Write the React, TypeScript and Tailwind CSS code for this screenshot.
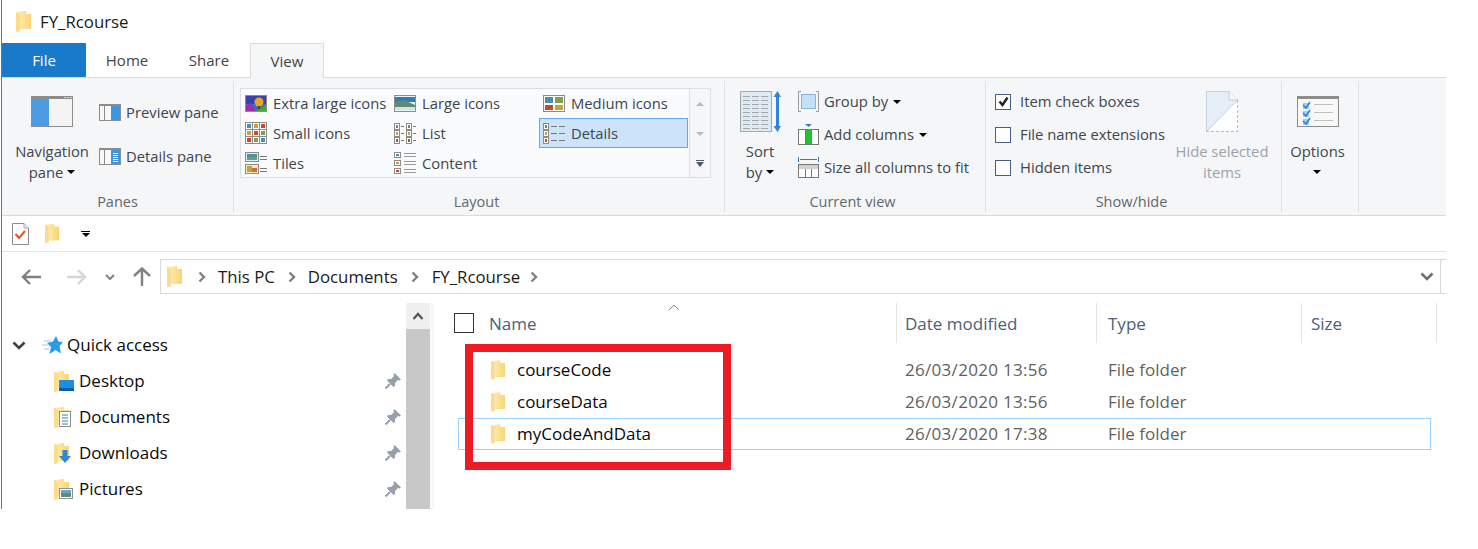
import React from 'react';

const FONT = "font-['Open_Sans',sans-serif]";

function Folder({ className = 'w-[15px] h-[21px]' }: { className?: string }) {
  return (
    <svg viewBox="0 0 15 21" className={className}>
      <defs>
        <linearGradient id="fold" x1="0" y1="0" x2="1" y2="0">
          <stop offset="0" stopColor="#fff0b8" />
          <stop offset="1" stopColor="#f8d476" />
        </linearGradient>
      </defs>
      <path d="M0 1 L10 0 L10 3 L15 3 L15 18 L4 18 L4 20 L1 21 L0 20 Z" fill="url(#fold)" />
      <path d="M0 1 L4 3 L4 20 L1 21 L0 20 Z" fill="#fbdc8c" />
    </svg>
  );
}

function Caret() {
  return <span className="inline-block w-0 h-0 border-l-[4px] border-r-[4px] border-t-[4px] border-l-transparent border-r-transparent border-t-black align-middle" />;
}

function NavPaneIcon() {
  return (
    <svg viewBox="0 0 42 31" className="w-[42px] h-[31px]">
      <rect x="0.5" y="0.5" width="41" height="30" fill="#f4f4f4" stroke="#8c8c8c" />
      <rect x="0" y="0" width="42" height="3" fill="#8c8c8c" />
      <rect x="33" y="1" width="2" height="1" fill="#ddd" /><rect x="36" y="1" width="2" height="1" fill="#ddd" /><rect x="39" y="1" width="2" height="1" fill="#ddd" />
      <rect x="1" y="3" width="17" height="27" fill="#4a9de2" />
    </svg>
  );
}

function PaneIcon({ lines }: { lines?: boolean }) {
  return (
    <svg viewBox="0 0 22 17" className="w-[22px] h-[17px]">
      <rect x="0.5" y="0.5" width="21" height="16" fill="#f8f8f8" stroke="#8c8c8c" />
      <rect x="0" y="0" width="22" height="2" fill="#8c8c8c" />
      <rect x="5" y="2" width="1" height="14" fill="#8c8c8c" />
      <rect x="12" y="2" width="9" height="14" fill="#3d96e0" />
      {lines && [5, 7, 9, 11, 13].map((y) => <rect key={y} x="14" y={y} width="5" height="1" fill="#fff" />)}
    </svg>
  );
}

function Pic({ x, y, w, h, kind }: { x: number; y: number; w: number; h: number; kind: number }) {
  const fills = ['#4d8fa8', '#c9a13a', '#c8492b', '#7ea04c'];
  return (
    <g>
      <rect x={x + 0.5} y={y + 0.5} width={w - 1} height={h - 1} fill="#fff" stroke="#8c8c8c" />
      <rect x={x + 2} y={y + 2} width={w - 4} height={h - 4} fill={fills[kind % 4]} />
    </g>
  );
}

function LayoutIcon({ name }: { name: string }) {
  if (name === 'xl') {
    return (
      <svg viewBox="0 0 22 17" className="w-[22px] h-[17px]">
        <rect x="0.5" y="0.5" width="21" height="16" fill="#2f6fd0" stroke="#8c8c8c" />
        <rect x="1" y="1" width="20" height="8" fill="#3b3fb0" />
        <path d="M1 16 L1 11 L6 8 L10 16 Z" fill="#a52aa5" />
        <path d="M11 16 L21 10 L21 16 Z" fill="#46a832" />
        <circle cx="14" cy="7" r="4.5" fill="#e8a820" />
        <rect x="13" y="11" width="2" height="3" fill="#6b3a1a" />
      </svg>
    );
  }
  if (name === 'large') {
    return (
      <svg viewBox="0 0 22 17" className="w-[22px] h-[17px]">
        <rect x="0.5" y="0.5" width="21" height="16" fill="#eef3f5" stroke="#8c8c8c" />
        <rect x="1" y="2" width="20" height="5" fill="#2f7fb0" />
        <path d="M1 7 L10 5 L21 10 L21 15 L1 15 Z" fill="#5f8a7a" />
        <rect x="1" y="12" width="20" height="3" fill="#d5e3e0" />
      </svg>
    );
  }
  if (name === 'medium') {
    return (
      <svg viewBox="0 0 22 17" className="w-[22px] h-[17px]">
        <rect x="0.5" y="0.5" width="21" height="16" fill="#fff" stroke="#8c8c8c" />
        <rect x="2" y="2" width="8" height="6" fill="#4d8fa8" /><rect x="12" y="2" width="8" height="6" fill="#7ea04c" />
        <rect x="2" y="10" width="8" height="5" fill="#c8492b" /><rect x="12" y="10" width="8" height="5" fill="#c9a13a" />
      </svg>
    );
  }
  if (name === 'small') {
    return (
      <svg viewBox="0 0 22 22" className="w-[22px] h-[22px]">
        {[0, 7, 14].map((y, r) => [0, 7, 14].map((x, c) => <Pic key={`${r}${c}`} x={x} y={y} w={8} h={8} kind={r + c} />))}
      </svg>
    );
  }
  if (name === 'list' || name === 'details') {
    const cols = name === 'list' ? [0, 12] : [0];
    return (
      <svg viewBox="0 0 22 21" className="w-[22px] h-[21px]">
        {cols.map((x) => [0, 7, 14].map((y, r) => <Pic key={`${x}${y}`} x={x} y={y} w={6} h={7} kind={r} />))}
        {[3, 10, 17].map((y) =>
          name === 'list' ? (
            <g key={y}><rect x="7" y={y} width="3" height="1" fill="#777" /><rect x="19" y={y} width="3" height="1" fill="#777" /></g>
          ) : (
            <g key={y}><rect x="8" y={y} width="6" height="1" fill="#777" /><rect x="16" y={y} width="6" height="1" fill="#777" /></g>
          ),
        )}
      </svg>
    );
  }
  if (name === 'tiles') {
    return (
      <svg viewBox="0 0 22 22" className="w-[22px] h-[22px]">
        <rect x=".5" y=".5" width="13" height="9" fill="#dfe9e6" stroke="#8c8c8c" />
        <rect x="2" y="2" width="10" height="3" fill="#4d8fa8" /><rect x="2" y="5" width="10" height="3" fill="#6f9a7c" />
        <rect x=".5" y="12.5" width="13" height="9" fill="#f3ecc8" stroke="#8c8c8c" />
        <rect x="2" y="14" width="5" height="6" fill="#c9a13a" /><rect x="7" y="16" width="5" height="4" fill="#d9663a" />
        {[4, 7, 16, 19].map((y) => <rect key={y} x="15" y={y} width="7" height="1" fill="#777" />)}
      </svg>
    );
  }
  return (
    <svg viewBox="0 0 22 22" className="w-[22px] h-[22px]">
      {[0, 8, 16].map((y, r) => (
        <g key={y}>
          <Pic x={0} y={y} w={7} h={6} kind={r} />
          <rect x="10" y={y + 1} width="12" height="1" fill="#6a9fe0" />
          <rect x="10" y={y + 4} width="12" height="1" fill="#999" />
        </g>
      ))}
    </svg>
  );
}

function SortIcon() {
  return (
    <svg viewBox="0 0 41 41" className="ml-px w-[41px] h-[41px]">
      <rect x="0.5" y="0.5" width="31" height="40" fill="#dcebf3" stroke="#a8a8a8" />
      {[5, 9, 13, 17, 21, 25, 29, 33, 37].map((y) => (
        <g key={y} fill="#a8a8a8">
          <rect x="3" y={y} width="7" height="1" /><rect x="12" y={y} width="7" height="1" /><rect x="21" y={y} width="7" height="1" />
        </g>
      ))}
      <rect x="36" y="3" width="3" height="35" fill="#2f86d6" />
      <path d="M33.5 6 L37.5 0 L41 6 Z M33.5 35 L37.5 41 L41 35 Z" fill="#2f86d6" />
    </svg>
  );
}

function ViewIcon({ name }: { name: string }) {
  if (name === 'group') {
    return (
      <svg viewBox="0 0 21 21" className="w-[21px] h-[21px]">
        <path d="M3 .5H.5V20.5H3M18 .5H20.5V20.5H18" fill="none" stroke="#9a9a9a" />
        <rect x="3.5" y="3.5" width="14" height="14" fill="#c3e0fa" stroke="#86b4dc" />
      </svg>
    );
  }
  if (name === 'add') {
    return (
      <svg viewBox="0 0 21 21" className="w-[21px] h-[21px]">
        <path d="M7 0H14L10.5 3Z" fill="#2f7fc6" />
        <rect x="0.5" y="5.5" width="20" height="15" fill="#fff" stroke="#777" />
        <rect x="7" y="5" width="1" height="15" fill="#777" />
        <rect x="8" y="5" width="6" height="15" fill="#1ec233" />
      </svg>
    );
  }
  return (
    <svg viewBox="0 0 21 21" className="w-[21px] h-[21px]">
      <path d="M.5 0V5M20.5 0V5M2 2.5H19" stroke="#2f7fc6" fill="none" />
      <rect x="0.5" y="7.5" width="20" height="13" fill="#fff" stroke="#777" />
      <rect x="1" y="8" width="19" height="4" fill="#d0d0d0" />
      <path d="M7.5 12V20M13.5 12V20" stroke="#777" />
    </svg>
  );
}

function HideIcon() {
  return (
    <svg viewBox="0 0 32 41" className="w-[32px] h-[41px]">
      <path d="M.5 40.5V.5H23L31.5 9V40.5Z" fill="#fff" />
      <path d="M.5 40.5V.5H23L31.5 9Z" fill="#e6eef9" stroke="#c4cfe0" />
      <path d="M23 .5V9H31.5" fill="#f4f6f9" stroke="#c4cfe0" />
      <path d="M31.5 9V40.5H.5" fill="none" stroke="#b8bcc6" strokeDasharray="3 2" />
    </svg>
  );
}

function OptionsIcon() {
  return (
    <svg viewBox="0 0 42 31" className="w-[42px] h-[31px]">
      <rect x="0.5" y="0.5" width="41" height="30" fill="#f8f8f8" stroke="#8c8c8c" />
      <rect x="0" y="0" width="42" height="3" fill="#8c8c8c" />
      {[7, 15, 23].map((y) => (
        <g key={y}>
          <rect x="6" y={y} width="6" height="6" fill="#9fcdf2" />
          <path d={`M6 ${y + 2} L9 ${y + 5} L13 ${y - 1}`} fill="none" stroke="#2f86d6" strokeWidth="1.6" />
          <rect x="17" y={y + 1} width="19" height="1" fill="#c0c0c0" />
        </g>
      ))}
    </svg>
  );
}

function BigButton({ icon, lines, caret, className = '', muted }: { icon: React.ReactNode; lines: string[]; caret?: 'inline' | 'below'; className?: string; muted?: boolean }) {
  return (
    <div className={`flex flex-col items-center ${className}`}>
      <div className="h-[45px] flex items-center mt-[8px]">{icon}</div>
      <div className={`mt-[7px] text-center text-[14.8px] leading-[21px] whitespace-nowrap ${muted ? 'text-[#9aa3ad]' : 'text-[#3c4650]'}`}>
        {lines.map((l, i) => (
          <div key={l}>
            {l}
            {caret === 'inline' && i === lines.length - 1 && <span className="ml-[4px] relative -top-[2px]"><Caret /></span>}
          </div>
        ))}
        {caret === 'below' && <div className="-mt-[1px]"><span className="relative -top-[1px]"><Caret /></span></div>}
      </div>
    </div>
  );
}

function Group({ label, className, labelPad = '', children }: { label: string; className: string; labelPad?: string; children: React.ReactNode }) {
  return (
    <div className={`flex flex-col h-full border-r border-[#dfe1e3] ${className}`}>
      <div className="flex-1 flex min-h-0">{children}</div>
      <div className={`h-[22px] pt-[2px] flex items-center justify-center text-[14.5px] text-[#5f6770] ${labelPad}`}>{label}</div>
    </div>
  );
}

const layouts = [
  ['xl', 'Extra large icons'], ['large', 'Large icons'], ['medium', 'Medium icons'],
  ['small', 'Small icons'], ['list', 'List'], ['details', 'Details'],
  ['tiles', 'Tiles'], ['content', 'Content'],
];

function Ribbon() {
  return (
    <div className="h-[139px] bg-[#f5f6f7] border-t border-b border-[#dadbdc] py-[3px] flex">
      <Group label="Panes" className="w-[232px]">
        <BigButton className="w-[78px] ml-[11px]" icon={<NavPaneIcon />} lines={['Navigation', 'pane']} caret="inline" />
        <div className="ml-[8px] pt-[20px] flex flex-col gap-[22px]">
          <div className="flex items-center gap-[5px] h-[22px] text-[14.8px] text-[#3c4650]"><PaneIcon /> Preview pane</div>
          <div className="flex items-center gap-[5px] h-[22px] text-[14.8px] text-[#3c4650]"><PaneIcon lines /> Details pane</div>
        </div>
      </Group>
      <Group label="Layout" className="w-[491px]" labelPad="pr-[5px]">
        <div className="ml-[6px] mt-[7px] flex h-[90px]">
          <div className="w-[450px] bg-[#fafbfd] border border-[#dcdee0] grid grid-cols-[149px_149px_149px] grid-rows-[29px_30px_30px]">
            {layouts.map(([key, label]) => (
              <div key={key} className={`flex items-center gap-[6px] text-[14.8px] text-[#3c4650] whitespace-nowrap ${key === 'details' ? 'pl-[3px] bg-[#cce4f9] border border-[#69a8e6]' : 'pl-[4px]'}`}>
                <span className="w-[22px] flex justify-center"><LayoutIcon name={key} /></span>
                {label}
              </div>
            ))}
          </div>
          <div className="w-[21px] border border-l-0 border-[#dcdee0] flex flex-col text-[#a9b0b8]">
            <div className="h-[30px] flex items-center justify-center"><span className="w-0 h-0 border-l-[4px] border-r-[4px] border-b-[4px] border-l-transparent border-r-transparent border-b-[#b5bac0]" /></div>
            <div className="h-[30px] flex items-center justify-center"><span className="w-0 h-0 border-l-[4px] border-r-[4px] border-t-[4px] border-l-transparent border-r-transparent border-t-[#b5bac0]" /></div>
            <div className="h-[28px] flex flex-col items-center justify-center gap-[1px]">
              <span className="w-[8px] h-px bg-[#4c5a6a]" />
              <span className="w-0 h-0 border-l-[4px] border-r-[4px] border-t-[5px] border-l-transparent border-r-transparent border-t-[#4c5a6a]" />
            </div>
          </div>
        </div>
      </Group>
      <Group label="Current view" className="w-[261px]" labelPad="pr-[5px]">
        <BigButton className="w-[50px] ml-[10px]" icon={<SortIcon />} lines={['Sort', 'by']} caret="inline" />
        <div className="ml-[13px] pt-[4px] flex flex-col text-[14.8px] text-[#3c4650] whitespace-nowrap">
          <div className="h-[33px] flex items-center gap-[5px]"><ViewIcon name="group" /> Group by <Caret /></div>
          <div className="h-[33px] flex items-center gap-[5px]"><ViewIcon name="add" /> Add columns <Caret /></div>
          <div className="h-[33px] flex items-center gap-[5px]"><ViewIcon name="size" /> Size all columns to fit</div>
        </div>
      </Group>
      <Group label="Show/hide" className="w-[296px]" labelPad="pr-[4px]">
        <div className="ml-[9px] w-[177px] pt-[4px] flex flex-col text-[14.8px] text-[#3c4650] whitespace-nowrap">
          {['Item check boxes', 'File name extensions', 'Hidden items'].map((l, i) => (
            <div key={l} className="h-[33px] flex items-center gap-[9px]">
              <span className="w-[16px] h-[16px] border border-[#44607f] bg-white flex items-center justify-center">
                {i === 0 && <svg viewBox="0 0 13 13" className="w-[13px] h-[13px]"><path d="M2.5 6.5 L5.5 10 L10.5 2.5" fill="none" stroke="#222" strokeWidth="2.4" /></svg>}
              </span>
              {l}
            </div>
          ))}
        </div>
        <BigButton className="w-[100px]" muted icon={<HideIcon />} lines={['Hide selected', 'items']} />
      </Group>
      <Group label="" className="w-[77px]">
        <BigButton className="w-[71px]" icon={<OptionsIcon />} lines={['Options']} caret="below" />
      </Group>
    </div>
  );
}

function Chevron({ className = '' }: { className?: string }) {
  return (
    <svg viewBox="0 0 8 12" className={`w-[8px] h-[12px] ${className}`}>
      <path d="M1.5 1.5 L6 6 L1.5 10.5" fill="none" stroke="#808080" strokeWidth="2.4" />
    </svg>
  );
}

function Arrow({ color, flip }: { color: string; flip?: boolean }) {
  return (
    <svg viewBox="0 0 20 16" className={`w-[20px] h-[16px] ${flip ? 'rotate-180' : ''}`}>
      <path d="M20 8H2M9 1L2 8L9 15" fill="none" stroke={color} strokeWidth="2.4" />
    </svg>
  );
}

function NavBar() {
  return (
    <div className="h-[51px] flex items-start pt-[7px]">
      <div className="h-[35px] flex items-center">
        <span className="ml-[19px]"><Arrow color="#808080" /></span>
        <span className="ml-[26px]"><Arrow color="#d6d6d6" flip /></span>
        <svg viewBox="0 0 10 6" className="ml-[18px] w-[10px] h-[6px]"><path d="M1 1 L5 5 L9 1" fill="none" stroke="#808080" strokeWidth="2" /></svg>
        <svg viewBox="0 0 18 19" className="ml-[18px] w-[18px] h-[19px]"><path d="M9 19V2M1 9L9 1.5L17 9" fill="none" stroke="#808080" strokeWidth="2.4" /></svg>
      </div>
      <div className="ml-[9px] flex-1 h-[35px] border-y border-l border-[#d9d9d9] flex items-center text-[16.8px] text-[#1a1a1a]">
        <Folder className="ml-[6px] w-[15px] h-[21px]" />
        <Chevron className="ml-[16px]" />
        <span className="ml-[12px]">This PC</span>
        <Chevron className="ml-[13px]" />
        <span className="ml-[12px]">Documents</span>
        <Chevron className="ml-[13px]" />
        <span className="ml-[13px]">FY_Rcourse</span>
        <Chevron className="ml-[10px]" />
        <svg viewBox="0 0 14 9" className="ml-auto mr-[6px] w-[14px] h-[9px]"><path d="M1.5 1.5 L7 7 L12.5 1.5" fill="none" stroke="#707070" strokeWidth="2.6" /></svg>
        <span className="w-px h-full bg-[#d9d9d9] mr-[5px]" />
      </div>
    </div>
  );
}

function Pin() {
  return (
    <svg viewBox="0 0 16 16" className="w-[16px] h-[16px]">
      <path d="M9.5 0 L16 6.5 L14.5 7.5 L13 7 L10 10 L10 13 L8.5 14 L2 7.5 L3 6 L6 6 L9 3 L8.5 1.5 Z" fill="#95a0ab" />
      <path d="M5 11 L0.5 15.5" stroke="#95a0ab" strokeWidth="2" />
    </svg>
  );
}

function QuickItem({ label, badge }: { label: string; badge: React.ReactNode }) {
  return (
    <div className="h-9 flex items-center">
      <span className="relative ml-[52px] w-[20px] h-[21px]">
        <Folder className="w-[15px] h-[21px]" />
        <span className="absolute left-[5px] bottom-[1px]">{badge}</span>
      </span>
      <span className="ml-[5px] text-[17px] text-[#0a0a0a]">{label}</span>
      <span className="ml-auto mr-[5px]"><Pin /></span>
    </div>
  );
}

function Sidebar() {
  return (
    <div className="w-[404px] h-full pt-[24px]">
      <div className="h-9 flex items-center text-[17px] text-[#0a0a0a]">
        <svg viewBox="0 0 14 9" className="ml-[10px] w-[14px] h-[9px]"><path d="M1.5 1.5 L7 7 L12.5 1.5" fill="none" stroke="#404040" strokeWidth="2.6" /></svg>
        <svg viewBox="0 0 21 18" className="ml-[16px] w-[21px] h-[18px]">
          <path d="M14 0 L16.5 5.5 L21 6 L17.5 10 L19 17.5 L13.5 14 L7.5 18 L9 11 L5 7 L11 5.5Z" fill="#2a9bea" />
          <path d="M2 5H9M0 9H6M2 13H7" stroke="#8fcdf5" strokeWidth="1" />
        </svg>
        <span className="ml-[4px]">Quick access</span>
      </div>
      <QuickItem label="Desktop" badge={
        <svg viewBox="0 0 15 11" className="block w-[15px] h-[11px]"><rect width="15" height="11" fill="#1a8fe3" /><rect y="8" width="15" height="3" fill="#0e5da8" /></svg>
      } />
      <QuickItem label="Documents" badge={
        <svg viewBox="0 0 12 16" className="block w-[12px] h-[16px]"><rect x=".5" y=".5" width="11" height="15" fill="#fff" stroke="#8c8c8c" /><path d="M3 4H9M3 7H9M3 10H9M3 13H9" stroke="#2f7fa8" /></svg>
      } />
      <QuickItem label="Downloads" badge={
        <svg viewBox="0 0 12 13" className="block w-[12px] h-[13px]"><path d="M3.5 0H8.5V6H12L6 13L0 6H3.5Z" fill="#2f86d6" /></svg>
      } />
      <QuickItem label="Pictures" badge={
        <svg viewBox="0 0 14 11" className="block w-[14px] h-[11px]"><rect x=".5" y=".5" width="13" height="10" fill="#fff" stroke="#909090" /><rect x="2" y="2" width="10" height="3" fill="#6aa5c5" /><rect x="2" y="5" width="10" height="4" fill="#5f8a7a" /></svg>
      } />
    </div>
  );
}

const files = [
  { name: 'courseCode', date: '26/03/2020 13:56' },
  { name: 'courseData', date: '26/03/2020 13:56' },
  { name: 'myCodeAndData', date: '26/03/2020 17:38', selected: true },
];

function Files() {
  return (
    <div className="flex-1 h-full">
      <div className="h-[40px] flex text-[17px] text-[#4c607a]">
        <div className="relative w-[463px] flex items-center border-r border-[#e5e5e5]">
          <span className="ml-[20px] w-[20px] h-[20px] border border-[#333] bg-white" />
          <span className="ml-[15px] pt-[2px]">Name</span>
          <svg viewBox="0 0 12 7" className="absolute left-[234px] top-[1px] w-[12px] h-[7px]"><path d="M1 6 L6 1 L11 6" fill="none" stroke="#888" /></svg>
        </div>
        <div className="w-[200px] pl-[8px] pt-[2px] flex items-center border-r border-[#e5e5e5]">Date modified</div>
        <div className="w-[205px] pl-[11px] pt-[2px] flex items-center border-r border-[#e5e5e5]">Type</div>
        <div className="w-[135px] pl-[9px] pt-[2px] flex items-center border-r border-[#e5e5e5]">Size</div>
      </div>
      <div className="mt-[11px] ml-[24px] w-[973px] text-[17px]">
        {files.map((f) => (
          <div key={f.name} className={`h-[32px] flex items-center ${f.selected ? 'border border-[#99d1ff]' : 'border border-transparent'}`}>
            <div className="w-[446px] flex items-center pl-[32px]">
              <Folder className="w-[14px] h-[20px]" />
              <span className="ml-[12px] text-[#0a0a0a]">{f.name}</span>
            </div>
            <div className="w-[203px] text-[#5f5f5f] tracking-[0.3px]">{f.date}</div>
            <div className="text-[#5f5f5f]">File folder</div>
          </div>
        ))}
      </div>
    </div>
  );
}

export default function App() {
  return (
    <div className={`relative w-full h-[549px] bg-white overflow-hidden ${FONT}`}>
      <div className="ml-px w-[1445px] h-[509px] border-l border-[#3a82c4] flex flex-col">
        <div className="h-[43px] flex items-center">
          <Folder className="ml-[14px] w-[15px] h-[21px]" />
          <span className="ml-[9px] text-[16.8px] text-[#1a1a1a]">FY_Rcourse</span>
        </div>
        <div className="h-[34px] flex text-[15px] text-[#444]">
          <div className="w-[84px] bg-[#1979ca] text-white flex items-center justify-center">File</div>
          <div className="w-[82px] flex items-center justify-center">Home</div>
          <div className="w-[82px] flex items-center justify-center">Share</div>
          <div className="w-[74px] h-[35px] bg-[#f5f6f7] border-x border-t border-[#dadbdc] flex items-center justify-center relative z-10">View</div>
        </div>
        <Ribbon />
        <div className="h-[36px] border-b border-[#e5e5e5] flex items-center">
          <svg viewBox="0 0 17 22" className="ml-[10px] w-[17px] h-[22px]">
            <path d="M.5.5H12L16.5 5V21.5H.5Z" fill="#fff" stroke="#8c8c8c" />
            <path d="M12 .5V5H16.5" fill="#eee" stroke="#a8a8a8" />
            <path d="M3.5 11L7 15L13 8" fill="none" stroke="#e8531f" strokeWidth="2" />
          </svg>
          <Folder className="ml-[16px] w-[14px] h-[21px]" />
          <span className="ml-[22px] flex flex-col items-center gap-[1px]">
            <span className="w-[9px] h-px bg-black" />
            <span className="w-0 h-0 border-l-[4px] border-r-[4px] border-t-[4px] border-l-transparent border-r-transparent border-t-black" />
          </span>
        </div>
        <NavBar />
        <div className="flex-1 flex min-h-0">
          <Sidebar />
          <div className="w-[24px] h-full flex flex-col">
            <div className="h-[26px] bg-[#f0f0f0] flex items-center justify-center">
              <svg viewBox="0 0 12 8" className="w-[12px] h-[8px]"><path d="M1.5 7 L6 2 L10.5 7" fill="none" stroke="#555" strokeWidth="2.2" /></svg>
            </div>
            <div className="flex-1 bg-[#c8c8c8]" />
          </div>
          <div className="w-[4px] h-full"><div className="ml-px w-[3px] h-full bg-[#f7f7f7]" /></div>
          <Files />
        </div>
      </div>
      {/* red annotation drawn over the screenshot */}
      <div className="absolute left-[465px] top-[344px] w-[266px] h-[126px] border-[8px] border-[#ed1c24]" />
    </div>
  );
}
